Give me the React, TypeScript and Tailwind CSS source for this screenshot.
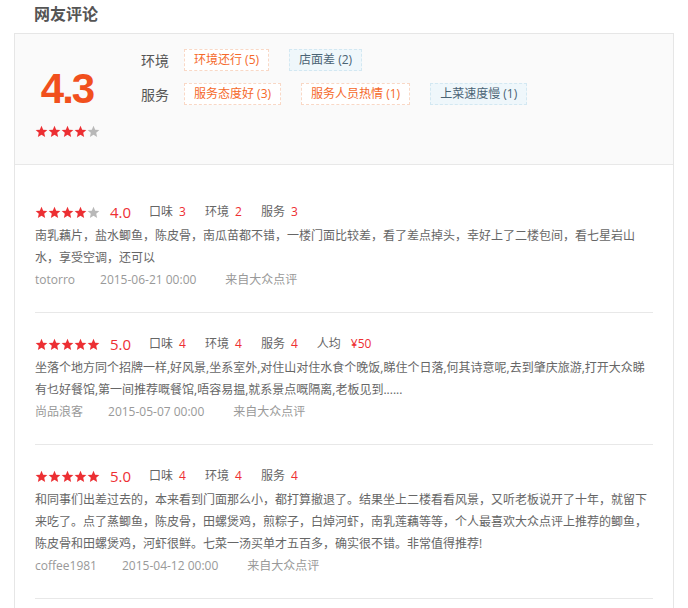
import React from 'react';

const FONT = { fontFamily: '"Open Sans", "Noto Sans CJK SC", sans-serif' };

const Star = ({ on }: { on: boolean }) => (
  <svg width="13" height="13" viewBox="0 0 24 24" className="block">
    <path
      d="M12 1.5l3.1 7.1 7.7.7-5.8 5.1 1.7 7.6L12 18l-6.7 4 1.7-7.6-5.8-5.1 7.7-.7z"
      fill={on ? '#ec2f33' : '#b8b8b8'}
    />
  </svg>
);

const Stars = ({ n }: { n: number }) => (
  <div className="flex">
    {[0, 1, 2, 3, 4].map((i) => (
      <Star key={i} on={i < n} />
    ))}
  </div>
);

const Tag = ({ text, good }: { text: string; good: boolean }) => (
  <span
    className={
      good
        ? 'h-[22px] leading-[20px] px-[9px] text-[12px] border border-dashed border-[#f9d8c6] text-[#f5692a] bg-white'
        : 'h-[22px] leading-[20px] px-[9px] text-[12px] border border-dashed border-[#d3e8f2] text-[#4a6374] bg-[#eff7fb]'
    }
  >
    {text}
  </span>
);

const reviews = [
  {
    stars: 4,
    rate: '4.0',
    scores: [['口味', '3'], ['环境', '2'], ['服务', '3']],
    price: '',
    text: '南乳藕片，盐水鲫鱼，陈皮骨，南瓜苗都不错，一楼门面比较差，看了差点掉头，幸好上了二楼包间，看七星岩山水，享受空调，还可以',
    user: 'totorro',
    date: '2015-06-21 00:00',
  },
  {
    stars: 5,
    rate: '5.0',
    scores: [['口味', '4'], ['环境', '4'], ['服务', '4']],
    price: '¥50',
    text: '坐落个地方同个招牌一样,好风景,坐系室外,对住山对住水食个晚饭,睇住个日落,何其诗意呢,去到肇庆旅游,打开大众睇有乜好餐馆,第一间推荐嘅餐馆,唔容易揾,就系景点嘅隔离,老板见到......',
    user: '尚品浪客',
    date: '2015-05-07 00:00',
  },
  {
    stars: 5,
    rate: '5.0',
    scores: [['口味', '4'], ['环境', '4'], ['服务', '4']],
    price: '',
    text: '和同事们出差过去的，本来看到门面那么小，都打算撤退了。结果坐上二楼看看风景，又听老板说开了十年，就留下来吃了。点了蒸鲫鱼，陈皮骨，田螺煲鸡，煎粽子，白焯河虾，南乳莲藕等等，个人最喜欢大众点评上推荐的鲫鱼，陈皮骨和田螺煲鸡，河虾很鲜。七菜一汤买单才五百多，确实很不错。非常值得推荐!',
    user: 'coffee1981',
    date: '2015-04-12 00:00',
  },
];

export default function App() {
  return (
    <div className="bg-white min-h-[608px] w-[688px] overflow-hidden" style={FONT}>
      <div className="h-[33px] pl-[34px] pt-[2px]">
        <h2 className="text-[16px] leading-[24px] font-bold text-[#555]">网友评论</h2>
      </div>

      <div className="ml-[14px] w-[660px] border-l border-r border-t border-[#e6e6e6] min-h-[575px]">
        {/* summary */}
        <div className="h-[131px] bg-[#fafafa] border-b border-[#e8e8e8] flex pt-[15px]">
          <div className="ml-[20px] w-[64px] flex flex-col items-center pt-[18px]">
            <div
              className="text-[42px] leading-[44px] font-bold text-[#f1501d] tracking-[-2px]"
              style={{ fontFamily: '"Liberation Sans", Arial, sans-serif' }}
            >
              4.3
            </div>
            <div className="mt-[14px]">
              <Stars n={4} />
            </div>
          </div>
          <div className="ml-[42px] flex flex-col gap-[12px]">
            <div className="flex items-center h-[22px]">
              <span className="w-[43px] text-[14px] text-[#555]">环境</span>
              <div className="flex gap-[20px]">
                <Tag text="环境还行 (5)" good />
                <Tag text="店面差 (2)" good={false} />
              </div>
            </div>
            <div className="flex items-center h-[22px]">
              <span className="w-[43px] text-[14px] text-[#555]">服务</span>
              <div className="flex gap-[20px]">
                <Tag text="服务态度好 (3)" good />
                <Tag text="服务人员热情 (1)" good />
                <Tag text="上菜速度慢 (1)" good={false} />
              </div>
            </div>
          </div>
        </div>

        {/* reviews */}
        <div className="px-[20px] pt-[16px]">
          {reviews.map((r, i) => (
            <div key={i} className="pt-[21px] pb-[21px] border-b border-[#e8e8e8]">
              <div className="flex items-center h-[20px]">
                <Stars n={r.stars} />
                <span
                  className="ml-[10px] text-[15px] text-[#ee2f33]"
                  style={{ fontFamily: '"Open Sans", sans-serif' }}
                >
                  {r.rate}
                </span>
                <div className="ml-[18px] flex items-center gap-[19px] text-[12px] text-[#666]">
                  {r.scores.map(([k, v]) => (
                    <span key={k}>
                      {k}
                      <span className="ml-[6px] text-[#ee2f33]">{v}</span>
                    </span>
                  ))}
                  {r.price && (
                    <span>
                      人均
                      <span className="ml-[10px] text-[#ee2f33]">{r.price}</span>
                    </span>
                  )}
                </div>
              </div>
              <p className="mt-[3px] text-[12px] leading-[22px] text-[#666]">{r.text}</p>
              <div className="flex text-[12px] leading-[22px] text-[#999]">
                <span className="mr-[25px]">{r.user}</span>
                <span className="mr-[29px]">{r.date}</span>
                <span>来自大众点评</span>
              </div>
            </div>
          ))}
        </div>
      </div>
    </div>
  );
}
